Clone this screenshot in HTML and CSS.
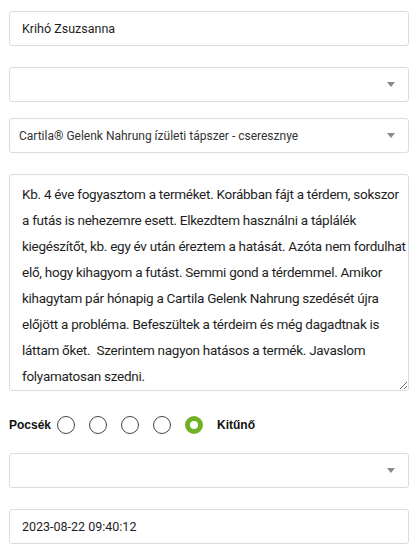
FILE: index.html
```html
<!DOCTYPE html>
<html lang="hu">
<head>
<meta charset="utf-8">
<link rel="stylesheet" href="styles.css">
</head>
<body>
<form class="form">
  <input class="field f-name" type="text" value="Krihó Zsuzsanna">
  <div class="select f-gap1"><span class="select-text"></span><span class="arrow"></span></div>
  <div class="select f-gap2"><span class="select-text">Cartila® Gelenk Nahrung ízületi tápszer - cseresznye</span><span class="arrow"></span></div>
  <textarea class="area">Kb. 4 éve fogyasztom a terméket. Korábban fájt a térdem, sokszor
a futás is nehezemre esett. Elkezdtem használni a táplálék
kiegészítőt, kb. egy év után éreztem a hatását. Azóta nem fordulhat
elő, hogy kihagyom a futást. Semmi gond a térdemmel. Amikor
kihagytam pár hónapig a Cartila Gelenk Nahrung szedését újra
előjött a probléma. Befeszültek a térdeim és még dagadtnak is
láttam őket.  Szerintem nagyon hatásos a termék. Javaslom
folyamatosan szedni.</textarea>
  <div class="rating">
    <span class="rate-label">Pocsék</span>
    <span class="radio"></span>
    <span class="radio"></span>
    <span class="radio"></span>
    <span class="radio"></span>
    <span class="radio checked"></span>
    <span class="rate-label end">Kitűnő</span>
  </div>
  <div class="select f-gap3"><span class="select-text"></span><span class="arrow"></span></div>
  <input class="field f-date" type="text" value="2023-08-22 09:40:12">
</form>
</body>
</html>
```

FILE: styles.css
```css
html, body {
  margin: 0;
  padding: 0;
  background: #fff;
}
body {
  font-family: Roboto, "Liberation Sans", Arial, sans-serif;
  color: #222;
}
.form {
  display: flex;
  flex-direction: column;
  padding: 11px 10px 0 9px;
}
.field {
  box-sizing: border-box;
  height: 35px;
  border: 1px solid #dcdcdc;
  border-radius: 3px;
  padding: 0 12px;
  font-family: Roboto, "Liberation Sans", Arial, sans-serif;
  font-size: 12.5px;
  color: #1e1e1e;
  background: #fff;
  outline: none;
}
.select {
  box-sizing: border-box;
  height: 35px;
  border: 1px solid #dcdcdc;
  border-radius: 3px;
  padding: 0 9px 0 9px;
  display: flex;
  align-items: center;
  font-size: 12px;
  color: #333;
}
.select-text {
  flex: 1;
}
.arrow {
  width: 0;
  height: 0;
  border-left: 4px solid transparent;
  border-right: 4px solid transparent;
  border-top: 5px solid #8a8a8a;
  margin-right: 4px;
}
.f-gap1 { margin-top: 21px; }
.f-gap2 { margin-top: 16px; }
.area {
  box-sizing: border-box;
  margin-top: 21px;
  height: 217px;
  border: 1px solid #dcdcdc;
  border-radius: 3px;
  padding: 6px 12px 1px 12px;
  font-family: Roboto, "Liberation Sans", Arial, sans-serif;
  font-size: 13.5px;
  letter-spacing: -0.27px;
  line-height: 26px;
  color: #1e1e1e;
  white-space: pre;
  resize: vertical;
  outline: none;
  overflow: hidden;
}
.rating {
  display: flex;
  align-items: center;
  height: 34px;
  margin-top: 17px;
  gap: 14px;
}
.rate-label {
  font-family: "Liberation Sans", Arial, sans-serif;
  font-weight: bold;
  font-size: 12px;
  color: #111;
  margin-right: -8px;
}
.rate-label.end {
  margin-right: 0;
}
.radio {
  box-sizing: border-box;
  width: 18px;
  height: 18px;
  border: 1px solid #444;
  border-radius: 50%;
}
.radio.checked {
  border: 5px solid #6fb324;
}
.f-gap3 { margin-top: 11px; }
.f-date { margin-top: 21px; }
```
